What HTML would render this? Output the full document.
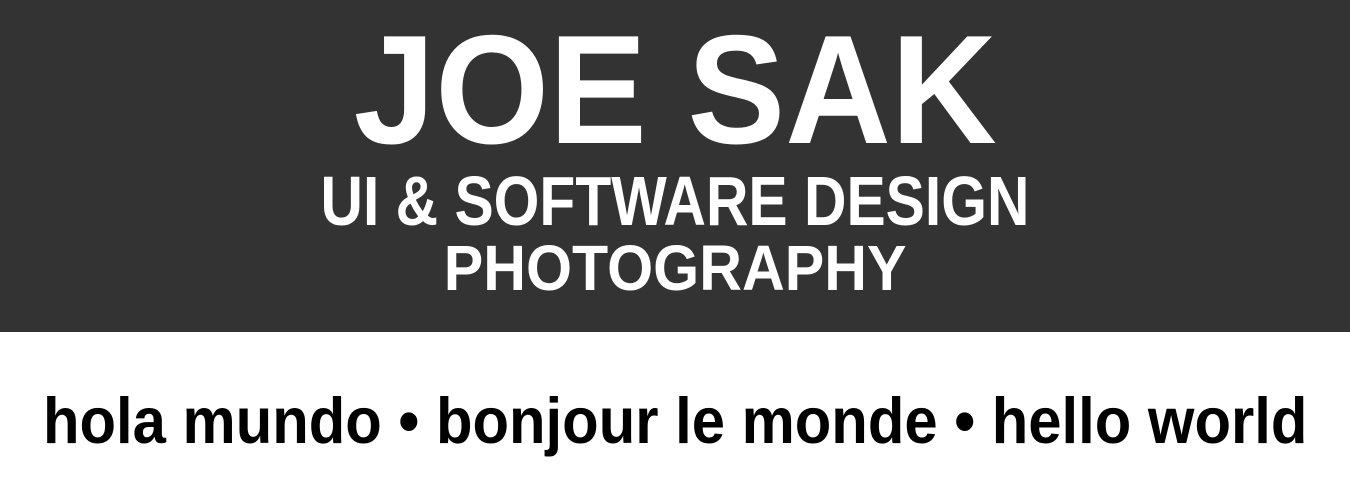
<!DOCTYPE html>
<html><head><style>
html,body{margin:0;padding:0;background:#fff;width:1350px;height:500px;overflow:hidden}
body{font-family:"Liberation Sans",Arial,sans-serif;font-weight:bold;position:relative}
.hdr{position:absolute;left:0;top:0;width:1350px;height:332px;background:#333}
.l{position:absolute;left:0;width:1350px;text-align:center;white-space:nowrap}
.l span{display:inline-block;transform-origin:center}
</style></head><body>
<div class="hdr"></div>
<div class="l" style="top:12px;font-size:155px;line-height:155px;color:#fff"><span style="transform:scaleX(0.945)">JOE SAK</span></div>
<div class="l" style="top:166px;font-size:70px;line-height:70px;color:#fff"><span style="transform:scaleX(0.84)">UI &amp; SOFTWARE DESIGN</span></div>
<div class="l" style="top:236px;font-size:64px;line-height:64px;color:#fff"><span style="transform:scaleX(0.925)">PHOTOGRAPHY</span></div>
<div class="l" style="top:386px;left:-12px;font-size:65px;line-height:70px;color:#000"><span style="transform:scaleX(0.92)">hola mundo • bonjour le monde • hello world</span></div>
</body></html>
